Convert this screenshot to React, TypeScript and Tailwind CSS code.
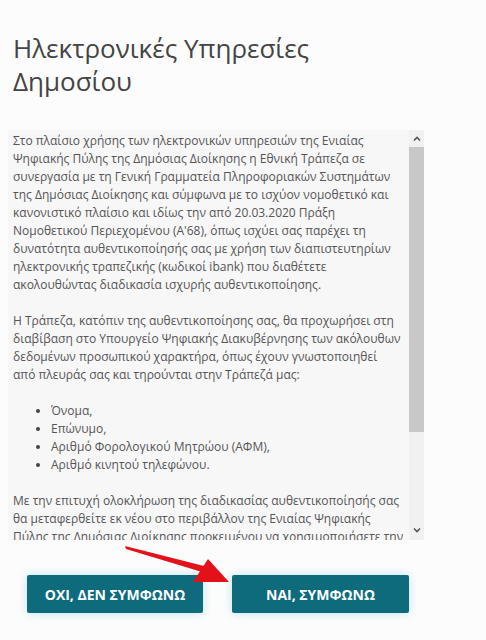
const font = { fontFamily: '"Open Sans", "Noto Sans", sans-serif' }

const intro = [
  'Στο πλαίσιο χρήσης των ηλεκτρονικών υπηρεσιών της Ενιαίας',
  'Ψηφιακής Πύλης της Δημόσιας Διοίκησης η Εθνική Τράπεζα σε',
  'συνεργασία με τη Γενική Γραμματεία Πληροφοριακών Συστημάτων',
  'της Δημόσιας Διοίκησης και σύμφωνα με το ισχύον νομοθετικό και',
  'κανονιστικό πλαίσιο και ιδίως την από 20.03.2020 Πράξη',
  'Νομοθετικού Περιεχομένου (Α\'68), όπως ισχύει σας παρέχει τη',
  'δυνατότητα αυθεντικοποίησής σας με χρήση των διαπιστευτηρίων',
  'ηλεκτρονικής τραπεζικής (κωδικοί ibank) που διαθέτετε',
  'ακολουθώντας διαδικασία ισχυρής αυθεντικοποίησης.',
]

const transfer = [
  'Η Τράπεζα, κατόπιν της αυθεντικοποίησης σας, θα προχωρήσει στη',
  'διαβίβαση στο Υπουργείο Ψηφιακής Διακυβέρνησης των ακόλουθων',
  'δεδομένων προσωπικού χαρακτήρα, όπως έχουν γνωστοποιηθεί',
  'από πλευράς σας και τηρούνται στην Τράπεζά μας:',
]

const fields = ['Όνομα,', 'Επώνυμο,', 'Αριθμό Φορολογικού Μητρώου (ΑΦΜ),', 'Αριθμό κινητού τηλεφώνου.']

const outro = [
  'Με την επιτυχή ολοκλήρωση της διαδικασίας αυθεντικοποίησής σας',
  'θα μεταφερθείτε εκ νέου στο περιβάλλον της Ενιαίας Ψηφιακής',
  'Πύλης της Δημόσιας Διοίκησης προκειμένου να χρησιμοποιήσετε την',
  'υπηρεσία που επιλέξατε.',
]

const Lines = ({ lines }: { lines: string[] }) => (
  <p className="mb-[18px]">
    {lines.map((l) => (
      <span key={l} className="block whitespace-nowrap">
        {l}
      </span>
    ))}
  </p>
)

const Chevron = ({ up }: { up?: boolean }) => (
  <svg width="8" height="6" viewBox="0 0 8 6" className="mx-auto">
    <path
      d={up ? 'M1 4.5 L4 1.5 L7 4.5' : 'M1 1.5 L4 4.5 L7 1.5'}
      fill="none"
      stroke="#555"
      strokeWidth="1.6"
    />
  </svg>
)

const App = () => {
  return (
    <div className="relative h-[640px] w-[486px] overflow-hidden bg-[#fcfcfc]" style={font}>
      <h1 className="pl-[13px] pt-[32px] text-[26px] font-normal leading-[33px] text-[#444]">
        Ηλεκτρονικές Υπηρεσίες
        <br />
        Δημοσίου
      </h1>

      <div className="ml-[8px] mt-[32px] flex h-[410px] w-[416px] bg-[#f7f7f7]">
        <div className="flex-1 overflow-hidden pl-[5px] pt-[2px] text-[12px] leading-[18px] text-[#555]">
          <Lines lines={intro} />
          <Lines lines={transfer} />
          <ul className="mb-[18px] list-disc pl-[38px] marker:text-[#444]">
            {fields.map((f) => (
              <li key={f}>{f}</li>
            ))}
          </ul>
          <Lines lines={outro} />
        </div>
        <div className="flex w-[15px] flex-col bg-[#f1f1f1]">
          <div className="flex h-[17px] items-center">
            <Chevron up />
          </div>
          <div className="h-[285px] bg-[#c8c8c8]" />
          <div className="flex-1" />
          <div className="flex h-[17px] items-center pb-[4px]">
            <Chevron />
          </div>
        </div>
      </div>

      <div className="ml-[27px] mt-[35px] flex gap-[29px]">
        <button className="h-[38px] w-[176px] rounded-[2px] bg-[#0d6b7b] text-[14px] font-bold text-white shadow-[0_0_10px_rgba(120,200,220,0.45)]">
          OXI, ΔΕΝ ΣΥΜΦΩΝΩ
        </button>
        <button className="h-[38px] w-[177px] rounded-[2px] bg-[#0d6b7b] text-[14px] font-bold text-white shadow-[0_0_10px_rgba(120,200,220,0.45)]">
          ΝΑΙ, ΣΥΜΦΩΝΩ
        </button>
      </div>

      <svg
        className="pointer-events-none absolute left-0 top-0"
        width="486"
        height="640"
        viewBox="0 0 486 640"
      >
        <polygon points="125,546 126,549 202,572 204,566" fill="#e3121a" />
        <polygon points="229,582 208,559 193,582" fill="#e3121a" />
      </svg>
    </div>
  )
}

export default App
